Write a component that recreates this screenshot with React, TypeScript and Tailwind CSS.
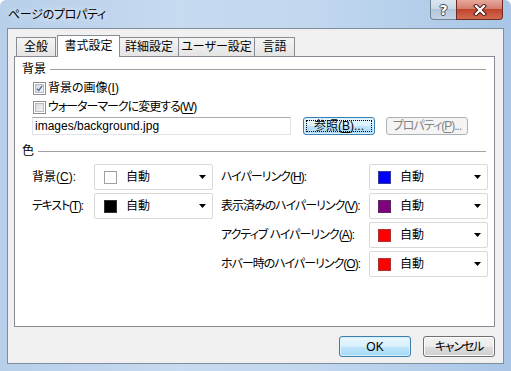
import React from "react";

function U({ c }: { c: string }) {
  return <span className="underline decoration-1 underline-offset-[2px]">{c}</span>;
}

function Checkbox({ checked }: { checked?: boolean }) {
  return (
    <div className="w-[13px] h-[13px] border border-[#8e8f8f] bg-white p-px shrink-0">
      <div className="w-full h-full border border-[#b9bdc3] bg-[linear-gradient(135deg,#d6d9dd,#f4f4f4)] flex items-center justify-center">
        {checked && (
          <svg width="9" height="9" viewBox="0 0 9 9">
            <path d="M1.2 4.6 L3.4 7.2 L7.8 1.2" stroke="#4a6aa5" strokeWidth="1.7" fill="none" />
          </svg>
        )}
      </div>
    </div>
  );
}

function Arrow() {
  return (
    <svg width="7" height="4" viewBox="0 0 7 4" className="shrink-0">
      <path d="M0 0H7L3.5 4Z" fill="#000" />
    </svg>
  );
}

function Combo({ swatch, pl }: { swatch: string; pl: string }) {
  return (
    <div className={`h-[26px] w-full border border-[#d9d9d9] rounded-[2px] bg-white flex items-center ${pl} pr-[6px]`}>
      <div className={`w-[13px] h-[13px] shrink-0 ${swatch}`} />
      <span className="ml-[9px] flex-1">自動</span>
      <Arrow />
    </div>
  );
}

function Tab({ w, children }: { w: string; children: React.ReactNode }) {
  return (
    <div
      className={`${w} h-[19px] -ml-px border border-b-0 border-[#898c95] bg-[linear-gradient(#f4f4f4,#e4e4e4)] flex items-center justify-center leading-[14px]`}
    >
      <span>{children}</span>
    </div>
  );
}

const normalBtn =
  "border border-[#707070] rounded-[3px] bg-[linear-gradient(#f2f2f2_0%,#ebebeb_50%,#dddddd_50%,#cfcfcf_100%)] shadow-[inset_0_0_0_1px_#fbfbfb]";
const blueBtn =
  "border border-[#3c7fb1] rounded-[3px] bg-[linear-gradient(#eaf6fd_0%,#d9f0fc_50%,#bee6fd_50%,#a7d9f5_100%)] shadow-[inset_0_0_0_1px_#d8effc]";
const disabledBtn = "border border-[#adb2b5] rounded-[3px] bg-[#f4f4f4] text-[#838383]";

export default function App() {
  return (
    <div className="w-[511px] h-[371px] flex flex-col overflow-hidden whitespace-nowrap rounded-t-[6px] bg-[linear-gradient(90deg,#b7cfe9_0%,#c6daf0_35%,#c2d8ef_60%,#a9c6e6_100%)] font-['Liberation_Sans','Noto_Sans_CJK_JP',sans-serif] [font-feature-settings:'palt'] text-[12px] text-black">
      {/* Title bar */}
      <div className="h-[28px] flex items-start justify-between shrink-0">
        <div className="pl-[8px] pt-[8px] leading-[14px] text-[12px] tracking-[-0.3px] [text-shadow:0_0_6px_#ffffff]">
          <span>ページのプロパティ</span>
        </div>
        <div className="flex pr-[8px]">
          <div className="w-[27px] h-[20px] border border-t-0 border-[#6f8195] rounded-bl-[4px] bg-[linear-gradient(#dbe6f1_0%,#c9d7e6_50%,#b3c5d9_50%,#c4d5e7_100%)] flex items-center justify-center">
            <span className="font-['DejaVu_Sans',sans-serif] font-bold text-[14px] leading-[14px] text-white [text-shadow:1px_0_0_#3b4a5c,-1px_0_0_#3b4a5c,0_1px_0_#3b4a5c,0_-1px_0_#3b4a5c]">?</span>
          </div>
          <div className="w-[47px] h-[20px] -ml-px border border-t-0 border-[#6d2a22] rounded-br-[4px] bg-[linear-gradient(#e7a89c_0%,#d4806f_45%,#c2442f_50%,#d26a4f_100%)] flex items-center justify-center">
            <svg width="14" height="12" viewBox="0 0 14 12">
              <path d="M3 2 L11 10 M11 2 L3 10" stroke="#4a1c16" strokeWidth="4.2" strokeLinecap="square" />
              <path d="M3 2 L11 10 M11 2 L3 10" stroke="#ffffff" strokeWidth="2.2" strokeLinecap="square" />
            </svg>
          </div>
        </div>
      </div>

      {/* Client area */}
      <div className="mx-[7px] h-[336px] border border-[#7f8d9c] bg-[#f0f0f0] flex flex-col shrink-0">
        {/* Tabs */}
        <div className="mt-[6px] ml-[6px] mr-[8px] h-[21px] flex items-end pl-[3px]">
          <Tab w="w-[40px]">全般</Tab>
          <div className="ml-[1px] w-[63px] h-[22px] -mb-px relative z-10 bg-white border border-b-0 border-[#898c95] flex items-start justify-center pt-[3px] leading-[14px]">
            <span>書式設定</span>
          </div>
          <Tab w="w-[60px]">詳細設定</Tab>
          <Tab w="w-[77px]">ユーザー設定</Tab>
          <Tab w="w-[41px]">言語</Tab>
        </div>

        {/* Panel */}
        <div className="ml-[6px] mr-[8px] h-[271px] border border-[#898c95] bg-white flex flex-col leading-[14px]">
          {/* 背景 group */}
          <div className="mt-[5px] h-[14px] flex items-center pl-[7px] pr-[8px]">
            <span>背景</span>
            <div className="ml-[4px] flex-1 h-px bg-[#a0a0a0]" />
          </div>
          <div className="mt-[5px] h-[14px] flex items-center pl-[18px]">
            <Checkbox checked />
            <span className="ml-[2px]">
              背景の画像(<U c="I" />)
            </span>
          </div>
          <div className="mt-[5px] h-[14px] flex items-center pl-[18px]">
            <Checkbox />
            <span className="ml-[2px] tracking-[-1px]">
              ウォーターマークに変更する(<U c="W" />)
            </span>
          </div>
          <div className="mt-[3px] h-[18px] flex items-stretch pl-[17px]">
            <div className="w-[259px] border border-[#e2e3ea] border-t-[#abadb3] bg-white flex items-center pl-[2px]">
              <span>images/background.jpg</span>
            </div>
            <div className={`relative ml-[12px] w-[72px] ${blueBtn} flex items-center justify-center`}>
              <div className="absolute inset-[2px] border border-dotted border-black" />
              <span className="relative">
                参照(<U c="B" />)...
              </span>
            </div>
            <div className={`ml-[11px] w-[82px] ${disabledBtn} flex items-center justify-center`}>
              <span className="tracking-[-1px]">
                プロパティ(<U c="P" />)...
              </span>
            </div>
          </div>

          {/* 色 group */}
          <div className="mt-[9px] h-[14px] flex items-center pl-[7px] pr-[8px]">
            <span>色</span>
            <div className="ml-[4px] flex-1 h-px bg-[#a0a0a0]" />
          </div>
          <div className="mt-[6px] pl-[17px] grid grid-cols-[62px_119px_156px_119px] auto-rows-[26px] gap-y-[3px]">
            <div className="flex items-center">
              <span>
                背景(<U c="C" />):
              </span>
            </div>
            <Combo swatch="bg-white border border-[#a0a0a0]" pl="pl-[9px]" />
            <div className="flex items-center pl-[8px]">
              <span className="tracking-[-1px]">
                ハイパーリンク(<U c="H" />):
              </span>
            </div>
            <Combo swatch="bg-[#0000ff] border border-[#3a3a9a]" pl="pl-[8px]" />

            <div className="flex items-center">
              <span className="tracking-[-1.2px]">
                テキスト(<U c="T" />):
              </span>
            </div>
            <Combo swatch="bg-black border border-[#333]" pl="pl-[9px]" />
            <div className="flex items-center pl-[8px]">
              <span className="tracking-[-1px]">
                表示済みのハイパーリンク(<U c="V" />):
              </span>
            </div>
            <Combo swatch="bg-[#800080] border border-[#5a2a5a]" pl="pl-[8px]" />

            <div />
            <div />
            <div className="flex items-center pl-[8px]">
              <span className="tracking-[-1px]">
                アクティブ ハイパーリンク(<U c="A" />):
              </span>
            </div>
            <Combo swatch="bg-[#ff0000] border border-[#a33]" pl="pl-[8px]" />

            <div />
            <div />
            <div className="flex items-center pl-[8px]">
              <span className="tracking-[-1px]">
                ホバー時のハイパーリンク(<U c="O" />):
              </span>
            </div>
            <Combo swatch="bg-[#ff0000] border border-[#a33]" pl="pl-[8px]" />
          </div>
        </div>

        {/* Dialog buttons */}
        <div className="mt-[9px] h-[21px] flex justify-end pr-[8px] leading-[14px]">
          <div className={`w-[72px] ${blueBtn} flex items-center justify-center`}>
            <span>OK</span>
          </div>
          <div className={`ml-[12px] w-[72px] ${normalBtn} flex items-center justify-center`}>
            <span className="tracking-[-1.2px]">キャンセル</span>
          </div>
        </div>
      </div>
    </div>
  );
}
